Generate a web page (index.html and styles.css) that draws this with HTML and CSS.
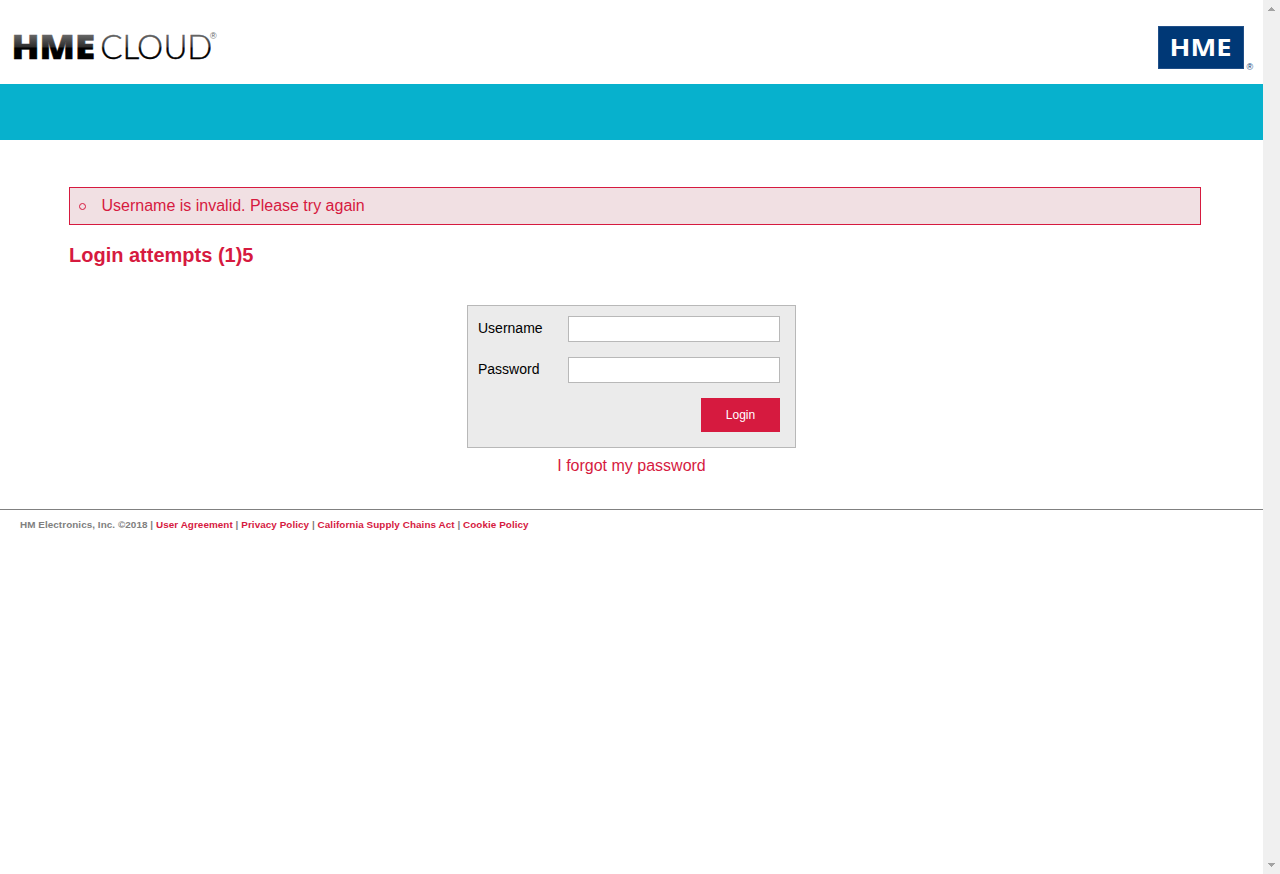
FILE: index.html
```html
<!DOCTYPE html>
<html lang="en">
<head>
<meta charset="utf-8">
<title>HME Cloud</title>
<link rel="stylesheet" href="styles.css">
</head>
<body>
<div class="page">
  <header class="header">
    <svg class="logo" width="208" height="34" viewBox="0 0 208 34">
      <defs>
        <linearGradient id="shade" gradientUnits="userSpaceOnUse" x1="0" y1="5" x2="0" y2="29">
          <stop offset="0" stop-color="#666"/><stop offset=".5" stop-color="#2c2c2c"/>
          <stop offset=".54" stop-color="#000"/><stop offset="1" stop-color="#000"/>
        </linearGradient>
      </defs>
      <text class="logo-bold" x="-.6" y="29" textLength="83.6" lengthAdjust="spacingAndGlyphs">HME</text>
      <text class="logo-light" x="88.3 110.5 125 151.5 175.3" y="29">CLOUD</text>
      <text class="logo-reg" x="198" y="9">®</text>
    </svg>
    <svg class="brand" width="98" height="48" viewBox="0 0 98 48">
      <rect x=".5" y=".5" width="85" height="42" fill="#003876" stroke="#204f88"/>
      <text class="brand-name" x="11.5" y="29.5" textLength="62" lengthAdjust="spacingAndGlyphs">HME</text>
      <text class="brand-reg" x="88.5" y="44">®</text>
    </svg>
  </header>
  <div class="band"></div>
  <main class="main">
    <ul class="errors"><li class="error">Username is invalid. Please try again</li></ul>
    <h2 class="attempts">Login attempts (1)5</h2>
    <form class="login">
      <label class="label" for="user">Username</label><input class="field" id="user" type="text">
      <label class="label" for="pass">Password</label><input class="field" id="pass" type="password">
      <button class="submit" type="button">Login</button>
    </form>
    <a class="forgot">I forgot my password</a>
  </main>
  <footer class="footer">HM Electronics, Inc. ©2018 | <a>User Agreement</a> | <a>Privacy Policy</a> | <a>California Supply Chains Act</a> | <a>Cookie Policy</a></footer>
</div>
<div class="scrollbar">
  <svg width="7" height="4" viewBox="0 0 7 4" shape-rendering="crispEdges"><path d="M3 0h1v1h1v1h1v1h1v1H0V3h1V2h1V1h1z" fill="#a3a3a3"/></svg>
  <svg width="7" height="4" viewBox="0 0 7 4" shape-rendering="crispEdges"><path d="M0 0h7v1H6v1H5v1H4v1H3V3H2V2H1V1H0z" fill="#a3a3a3"/></svg>
</div>
</body>
</html>
```
FILE: styles.css
```css
*, *::before { box-sizing: border-box; }
body {
  margin: 0;
  height: 874px;
  display: flex;
  overflow: hidden;
  background: #fff;
  color: #000;
  font-family: "Liberation Sans", Arial, sans-serif;
}
.page { width: 1263px; }
.header {
  height: 84px;
  padding: 26px 7px 0 12px;
  display: flex;
  justify-content: space-between;
}
.logo { margin-top: 4px; overflow: visible; }
.brand { overflow: visible; }
.logo-bold { font: 800 33.5px "Open Sans", sans-serif; fill: url(#shade); stroke: url(#shade); stroke-width: .5px; }
.logo-light { font: 300 33px Lato, sans-serif; fill: url(#shade); stroke: url(#shade); stroke-width: .4px; }
.logo-reg { font: 9px "Liberation Sans", sans-serif; fill: #666; }
.brand-name { font: 700 22.5px "Open Sans", sans-serif; fill: #fff; }
.brand-reg { font: 9px "Liberation Sans", sans-serif; fill: #003876; }
.band { height: 56px; background: #07b1cd; }
.main {
  height: 369px;
  padding: 47px 62px 0 69px;
  display: flex;
  flex-direction: column;
}
.errors {
  height: 38px;
  margin: 0;
  padding: 0 0 0 9px;
  border: 1px solid #d61a3f;
  background: #f1e0e3;
  color: #d61a3f;
  font-size: 16px;
  line-height: 36px;
  list-style: none;
}
.error { display: flex; align-items: center; gap: 15.5px; }
.error::before {
  content: "";
  width: 7px;
  height: 7px;
  margin-top: 1px;
  border: 1px solid #d61a3f;
  border-radius: 50%;
}
.attempts {
  margin: 18px 0 0;
  color: #d61a3f;
  font-size: 20px;
  line-height: 24px;
}
.login {
  align-self: center;
  width: 329px;
  height: 143px;
  margin: 38px 7px 0 0;
  padding: 10px 15px 15px 10px;
  display: grid;
  grid-template-columns: 90px 212px;
  grid-template-rows: 26px 26px 34px;
  row-gap: 15px;
  border: 1px solid #b8b8b8;
  background: #ebebeb;
}
.label { font-size: 14px; line-height: 24px; }
.field {
  width: 212px;
  height: 26px;
  border: 1px solid #b8b8b8;
  background: #fff;
}
.submit {
  grid-column: 2;
  justify-self: end;
  width: 79px;
  height: 34px;
  padding: 0;
  border: 0;
  background: #d61a3f;
  color: #fff;
  font: 12px "Liberation Sans", Arial, sans-serif;
}
.forgot {
  align-self: center;
  margin: 8px 7px 0 0;
  color: #d61a3f;
  font-size: 16px;
  line-height: 20px;
}
.footer {
  padding: 8px 20px;
  border-top: 1px solid #808080;
  color: #808080;
  font-size: 9.9px;
  font-weight: 700;
  letter-spacing: .065px;
  line-height: 14px;
}
.footer a { color: #d61a3f; }
.scrollbar {
  width: 17px;
  padding: 7px 0 7px;
  display: flex;
  flex-direction: column;
  align-items: center;
  justify-content: space-between;
  background: #f0f0f0;
}
```
